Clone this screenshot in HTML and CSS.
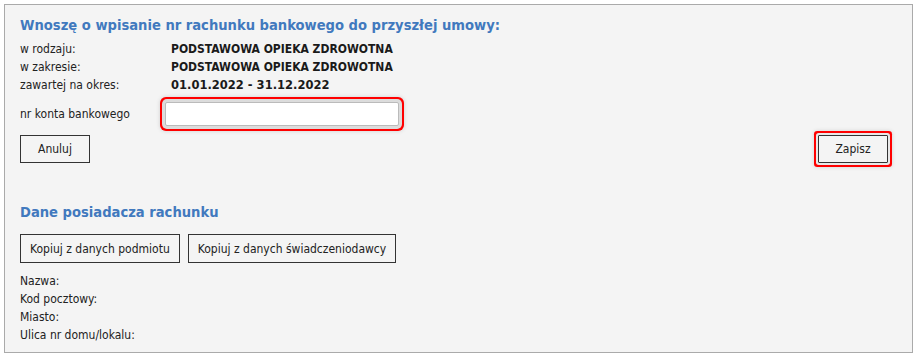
FILE: index.html
```html
<!DOCTYPE html>
<html lang="pl">
<head>
  <meta charset="UTF-8" />
  <title>Rachunek bankowy</title>
  <link rel="stylesheet" href="styles.css">
</head>
<body>
  <div class="panel">
    <h2 class="title">Wnoszę o wpisanie nr rachunku bankowego do przyszłej umowy:</h2>
    <div class="info">
      <span>w rodzaju:</span><strong>PODSTAWOWA OPIEKA ZDROWOTNA</strong>
      <span>w zakresie:</span><strong>PODSTAWOWA OPIEKA ZDROWOTNA</strong>
      <span>zawartej na okres:</span><strong class="date">01.01.2022 - 31.12.2022</strong>
    </div>

    <div class="account">
      <label for="konto">nr konta bankowego</label>
      <input type="text" id="konto" class="invalid" />
    </div>

    <div class="actions">
      <button type="button">Anuluj</button>
      <button type="submit" class="invalid">Zapisz</button>
    </div>

    <h2 class="title section">Dane posiadacza rachunku</h2>
    <div class="copy">
      <button type="button">Kopiuj z danych podmiotu</button>
      <button type="button">Kopiuj z danych świadczeniodawcy</button>
    </div>

    <div class="holder">
      <div>Nazwa:</div>
      <div>Kod pocztowy:</div>
      <div>Miasto:</div>
      <div>Ulica nr domu/lokalu:</div>
    </div>
  </div>
</body>
</html>
```

FILE: styles.css
```css
body {
  margin: 0;
  background-color: #fff;
  color: #222;
  font-family: "DejaVu Sans Condensed", "DejaVu Sans", sans-serif;
  font-size: 12px;
}
.panel {
  margin: 4px 5px 0 4px;
  padding: 11px 24px 8px 15px;
  background-color: #f4f4f4;
  border: 1px solid #aaa;
}
.title {
  margin: 0;
  font-size: 14.6px;
  line-height: 18px;
  color: #4179be;
}
.info {
  display: grid;
  grid-template-columns: 151px auto;
  line-height: 18px;
  margin-top: 6px;
}
.info strong {
  color: #1a1a1a;
}
.info .date {
  font-size: 12.8px;
}
.account {
  display: flex;
  align-items: center;
  margin-top: 8px;
}
.account label {
  width: 145px;
}
.account input {
  width: 234px;
  height: 24px;
  box-sizing: border-box;
  border: 1px solid #bbb;
  border-radius: 2px;
  background: #fff;
  font: inherit;
}
.invalid {
  box-shadow: 0 0 0 3px #dcdcdc, 0 0 0 5px #f00, 0 0 4px 5px rgba(0, 0, 0, 0.15);
}
button.invalid {
  box-shadow: 0 0 0 2px #e8e8e8, 0 0 0 4px #f00, 0 0 4px 4px rgba(0, 0, 0, 0.15);
  border-radius: 1px;
}
.actions {
  display: flex;
  justify-content: space-between;
  margin-top: 9px;
}
button {
  min-width: 70px;
  height: 28px;
  padding: 0 9px;
  background: #f4f4f4;
  border: 1px solid #333;
  color: #222;
  font: inherit;
  cursor: pointer;
}
.section {
  margin-top: 40px;
}
.copy {
  display: flex;
  gap: 8px;
  margin-top: 13px;
}
.copy button {
  height: 29px;
}
.holder {
  margin-top: 9px;
  line-height: 18px;
}
```
